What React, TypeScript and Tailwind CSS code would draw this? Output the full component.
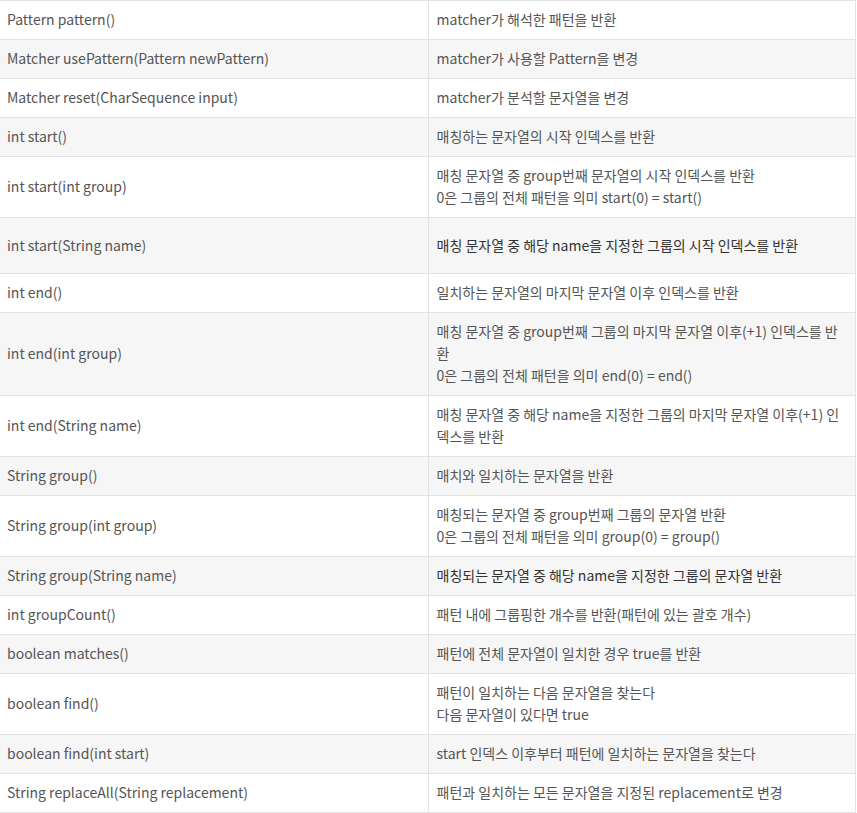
import React from "react";

type Row = { left: string; right: string[]; dark?: boolean; tall?: boolean };

const rows: Row[] = [
  { left: "Pattern pattern()", right: ["matcher가 해석한 패턴을 반환"] },
  { left: "Matcher usePattern(Pattern newPattern)", right: ["matcher가 사용할 Pattern을 변경"] },
  { left: "Matcher reset(CharSequence input)", right: ["matcher가 분석할 문자열을 변경"] },
  { left: "int start()", right: ["매칭하는 문자열의 시작 인덱스를 반환"] },
  { left: "int start(int group)", right: ["매칭 문자열 중 group번째 문자열의 시작 인덱스를 반환", "0은 그룹의 전체 패턴을 의미 start(0) = start()"] },
  { left: "int start(String name)", right: ["매칭 문자열 중 해당 name을 지정한 그룹의 시작 인덱스를 반환"], dark: true, tall: true },
  { left: "int end()", right: ["일치하는 문자열의 마지막 문자열 이후 인덱스를 반환"] },
  { left: "int end(int group)", right: ["매칭 문자열 중 group번째 그룹의 마지막 문자열 이후(+1) 인덱스를 반환", "0은 그룹의 전체 패턴을 의미 end(0) = end()"] },
  { left: "int end(String name)", right: ["매칭 문자열 중 해당 name을 지정한 그룹의 마지막 문자열 이후(+1) 인덱스를 반환"] },
  { left: "String group()", right: ["매치와 일치하는 문자열을 반환"] },
  { left: "String group(int group)", right: ["매칭되는 문자열 중 group번째 그룹의 문자열 반환", "0은 그룹의 전체 패턴을 의미 group(0) = group()"] },
  { left: "String group(String name)", right: ["매칭되는 문자열 중 해당 name을 지정한 그룹의 문자열 반환"], dark: true },
  { left: "int groupCount()", right: ["패턴 내에 그룹핑한 개수를 반환(패턴에 있는 괄호 개수)"] },
  { left: "boolean matches()", right: ["패턴에 전체 문자열이 일치한 경우 true를 반환"] },
  { left: "boolean find()", right: ["패턴이 일치하는 다음 문자열을 찾는다", "다음 문자열이 있다면 true"] },
  { left: "boolean find(int start)", right: ["start 인덱스 이후부터 패턴에 일치하는 문자열을 찾는다"] },
  { left: "String replaceAll(String replacement)", right: ["패턴과 일치하는 모든 문자열을 지정된 replacement로 변경"] },
];

export default function App() {
  return (
    <div
      className="w-[857px] bg-white text-[14px] leading-[22px] text-[#555]"
      style={{ fontFamily: '"Noto Sans CJK KR", "Noto Sans", sans-serif' }}
    >
      <table className="w-[856px] border-collapse table-fixed">
        <colgroup>
          <col className="w-[428px]" />
          <col />
        </colgroup>
        <tbody>
          {rows.map((r, i) => (
            <tr
              key={i}
              className={(i % 2 === 1 ? "bg-[#f6f6f6] " : "bg-white ") + (r.tall ? "h-[56px]" : "")}
            >
              <td className="border border-[#e3e3e3] border-l-0 pl-[7px] pr-2 pt-[7px] pb-[9px] align-middle">
                {r.left}
              </td>
              <td
                className={
                  "border border-[#e3e3e3] pl-[8px] pr-2 pt-[7px] pb-[9px] align-middle " +
                  (r.dark ? "text-[#333]" : "")
                }
              >
                {r.right.map((t, j) => (
                  <div key={j}>{t}</div>
                ))}
              </td>
            </tr>
          ))}
        </tbody>
      </table>
    </div>
  );
}
